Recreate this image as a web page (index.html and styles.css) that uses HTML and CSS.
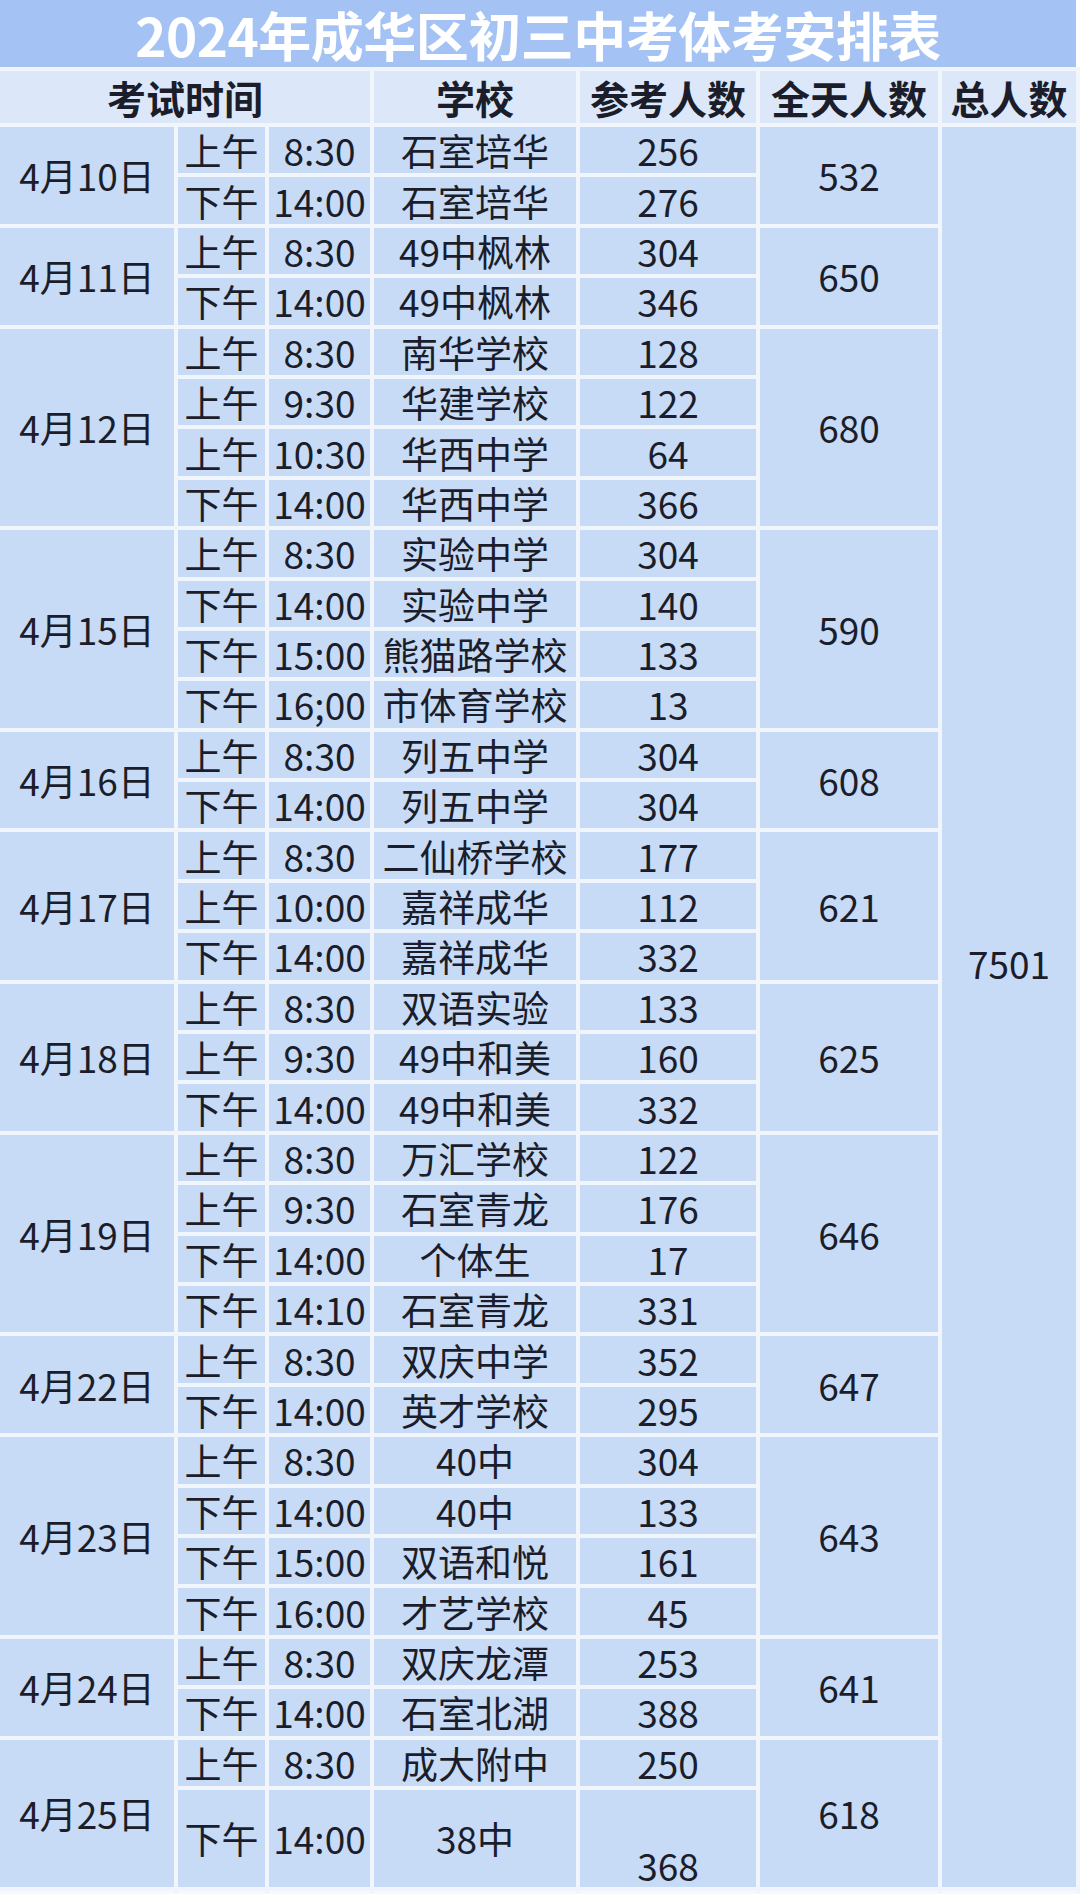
FILE: index.html
```html
<!DOCTYPE html>
<html lang="zh-CN">
<head>
<meta charset="utf-8">
<title>2024年成华区初三中考体考安排表</title>
<link rel="stylesheet" href="styles.css">
</head>
<body>
<div class="page">
  <div class="title"><span class="title-text">2024年成华区初三中考体考安排表</span></div>
  <table class="sheet">
    <colgroup>
      <col class="c-date"><col class="c-ap"><col class="c-time"><col class="c-school"><col class="c-count"><col class="c-day"><col class="c-total">
    </colgroup>
    <thead>
      <tr class="head">
        <th colspan="3">考试时间</th><th>学校</th><th>参考人数</th><th>全天人数</th><th>总人数</th>
      </tr>
    </thead>
    <tbody>
      <tr><td rowspan="2">4月10日</td><td>上午</td><td>8:30</td><td>石室培华</td><td>256</td><td rowspan="2">532</td><td rowspan="34" class="total">7501</td></tr>
      <tr><td>下午</td><td>14:00</td><td>石室培华</td><td>276</td></tr>

      <tr><td rowspan="2">4月11日</td><td>上午</td><td>8:30</td><td>49中枫林</td><td>304</td><td rowspan="2">650</td></tr>
      <tr><td>下午</td><td>14:00</td><td>49中枫林</td><td>346</td></tr>

      <tr><td rowspan="4">4月12日</td><td>上午</td><td>8:30</td><td>南华学校</td><td>128</td><td rowspan="4">680</td></tr>
      <tr><td>上午</td><td>9:30</td><td>华建学校</td><td>122</td></tr>
      <tr><td>上午</td><td>10:30</td><td>华西中学</td><td>64</td></tr>
      <tr><td>下午</td><td>14:00</td><td>华西中学</td><td>366</td></tr>

      <tr><td rowspan="4">4月15日</td><td>上午</td><td>8:30</td><td>实验中学</td><td>304</td><td rowspan="4">590</td></tr>
      <tr><td>下午</td><td>14:00</td><td>实验中学</td><td>140</td></tr>
      <tr><td>下午</td><td>15:00</td><td>熊猫路学校</td><td>133</td></tr>
      <tr><td>下午</td><td>16;00</td><td>市体育学校</td><td>13</td></tr>

      <tr><td rowspan="2">4月16日</td><td>上午</td><td>8:30</td><td>列五中学</td><td>304</td><td rowspan="2">608</td></tr>
      <tr><td>下午</td><td>14:00</td><td>列五中学</td><td>304</td></tr>

      <tr><td rowspan="3">4月17日</td><td>上午</td><td>8:30</td><td>二仙桥学校</td><td>177</td><td rowspan="3">621</td></tr>
      <tr><td>上午</td><td>10:00</td><td>嘉祥成华</td><td>112</td></tr>
      <tr><td>下午</td><td>14:00</td><td>嘉祥成华</td><td>332</td></tr>

      <tr><td rowspan="3">4月18日</td><td>上午</td><td>8:30</td><td>双语实验</td><td>133</td><td rowspan="3">625</td></tr>
      <tr><td>上午</td><td>9:30</td><td>49中和美</td><td>160</td></tr>
      <tr><td>下午</td><td>14:00</td><td>49中和美</td><td>332</td></tr>

      <tr><td rowspan="4">4月19日</td><td>上午</td><td>8:30</td><td>万汇学校</td><td>122</td><td rowspan="4">646</td></tr>
      <tr><td>上午</td><td>9:30</td><td>石室青龙</td><td>176</td></tr>
      <tr><td>下午</td><td>14:00</td><td>个体生</td><td>17</td></tr>
      <tr><td>下午</td><td>14:10</td><td>石室青龙</td><td>331</td></tr>

      <tr><td rowspan="2">4月22日</td><td>上午</td><td>8:30</td><td>双庆中学</td><td>352</td><td rowspan="2">647</td></tr>
      <tr><td>下午</td><td>14:00</td><td>英才学校</td><td>295</td></tr>

      <tr><td rowspan="4">4月23日</td><td>上午</td><td>8:30</td><td>40中</td><td>304</td><td rowspan="4">643</td></tr>
      <tr><td>下午</td><td>14:00</td><td>40中</td><td>133</td></tr>
      <tr><td>下午</td><td>15:00</td><td>双语和悦</td><td>161</td></tr>
      <tr><td>下午</td><td>16:00</td><td>才艺学校</td><td>45</td></tr>

      <tr><td rowspan="2">4月24日</td><td>上午</td><td>8:30</td><td>双庆龙潭</td><td>253</td><td rowspan="2">641</td></tr>
      <tr><td>下午</td><td>14:00</td><td>石室北湖</td><td>388</td></tr>

      <tr><td rowspan="2">4月25日</td><td>上午</td><td>8:30</td><td>成大附中</td><td>250</td><td rowspan="2">618</td></tr>
      <tr class="tall"><td>下午</td><td>14:00</td><td>38中</td><td class="bottom">368</td></tr>

      <tr class="tail"><td></td><td></td><td></td><td></td><td></td><td></td><td></td></tr>
    </tbody>
  </table>
</div>
</body>
</html>
```

FILE: styles.css
```css
html, body {
  margin: 0;
  padding: 0;
  background: #ffffff;
}

.page {
  width: 1080px;
  overflow: hidden;
  font-family: "Noto Sans CJK SC", "Noto Sans", sans-serif;
  color: #1b1e2a;
}

.title {
  width: 1076px;
  height: 67px;
  background: #a4c3f4;
  display: flex;
  align-items: center;
  justify-content: center;
}

.title-text {
  color: #ffffff;
  font-size: 53px;
  font-weight: 700;
  line-height: 62px;
  letter-spacing: -0.5px;
  white-space: nowrap;
}

.sheet {
  table-layout: fixed;
  border-collapse: separate;
  border-spacing: 4px;
  margin: 0 0 0 -4px;
  width: 1084px;
  background: #f1f6fd;
}

.c-date { width: 174px; }
.c-ap { width: 87px; }
.c-time { width: 101px; }
.c-school { width: 202px; }
.c-count { width: 176px; }
.c-day { width: 178px; }
.c-total { width: 134px; }

.sheet th,
.sheet td {
  padding: 0;
  text-align: center;
  vertical-align: middle;
  white-space: nowrap;
}

.head th {
  height: 52px;
  background: #dce8fa;
  font-size: 39px;
  font-weight: 700;
  line-height: 50px;
}

.sheet td {
  height: 46.4px;
  background: #c7dbf7;
  font-size: 37px;
  line-height: 44px;
  font-weight: 400;
}

.sheet tr.tall td {
  height: 96.8px;
}

.sheet td.bottom {
  vertical-align: bottom;
}

.sheet td.total {
  padding-bottom: 88px;
}

.sheet tr.tail td {
  height: 20px;
  background: #f6f9fe;
}
```
